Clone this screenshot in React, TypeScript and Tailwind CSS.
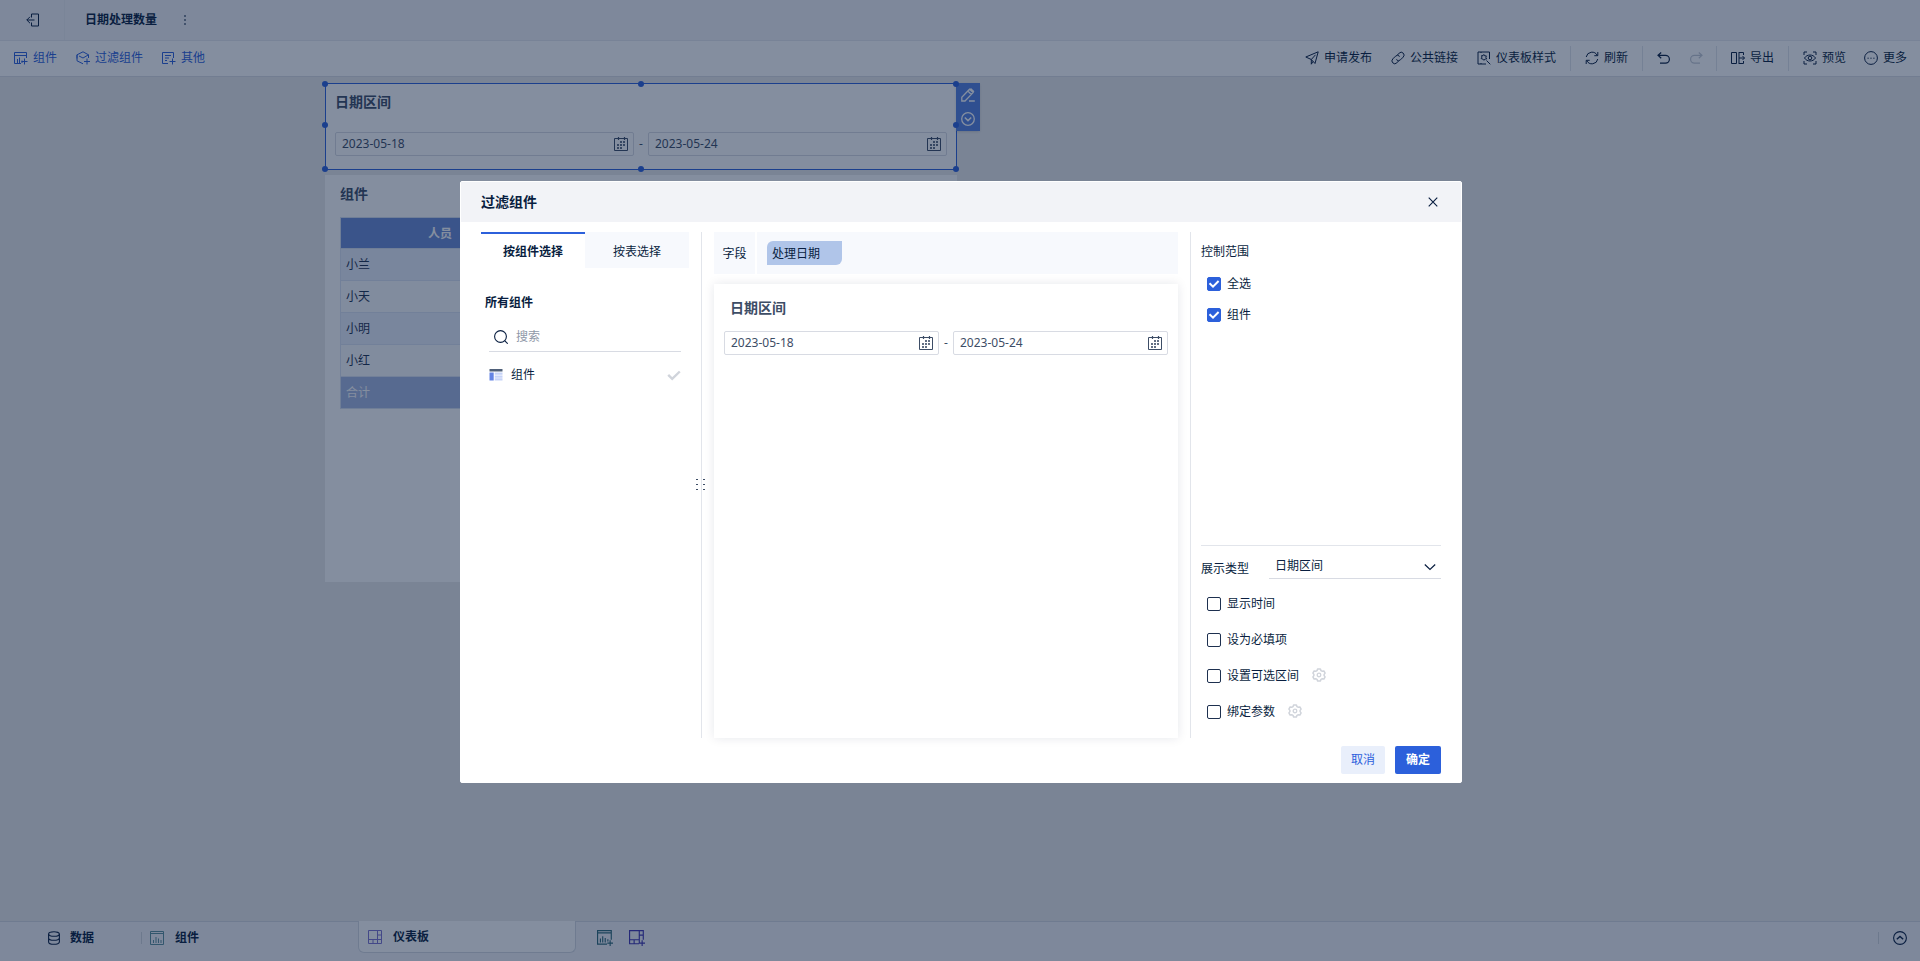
import { useState, type ReactNode } from "react";

type IconProps = { children: ReactNode; className?: string; size?: string; width?: number };

function Icon({ children, className = "", size = "size-[14px]", width = 1 }: IconProps) {
  return (
    <svg
      viewBox="0 0 14 14"
      fill="none"
      stroke="currentColor"
      strokeWidth={width}
      aria-hidden="true"
      className={`shrink-0 ${size} ${className}`}
    >
      {children}
    </svg>
  );
}

const ExitIcon = () => (
  <Icon>
    <path d="M5.500 4.500v-3.500h7v12h-7v-3.500M.8 7h7.700M4 3.800L.8 7 4 10.200" />
  </Icon>
);

const WidgetAddIcon = () => (
  <Icon>
    <path d="M12.500 7V1.500h-12v11H7M.5 4.500h12M3.500 12V8M5.500 12V6.500M8 12V9.500M7.500 10.500h6M10.500 7.500v6" />
  </Icon>
);

const CubeAddIcon = () => (
  <Icon>
    <path d="M7 12.800L1 9.800v-6L7 .8l5.500 3V7M3 5l4 2 5.500-3.200M1 7.500V3.800M8 10.500h6M11 7.500v6" />
  </Icon>
);

const OtherAddIcon = () => (
  <Icon>
    <path d="M11.500 7V1.500H.5v11H6M3 4.500h6M3 7h4M3 9.500h2M7.500 10.500h6M10.500 7.500v6" />
  </Icon>
);

const SendIcon = () => (
  <Icon>
    <path d="M.8 6L13.200.8 10 12.500 6.300 8.500 10.500 3.800M.8 6l5.500 2.500v4.700L8 10.400" />
  </Icon>
);

const LinkIcon = () => (
  <Icon>
    <path d="M6.200 4.300l2-2.200a2.800 2.800 0 014 4L9.500 8.800a2.800 2.800 0 01-4.200-.3" />
    <path d="M7.800 9.700l-2 2.200a2.800 2.800 0 01-4-4L4.500 5.200a2.800 2.800 0 014.200.3" />
  </Icon>
);

const StyleIcon = () => (
  <Icon>
    <path d="M12.500 8V1H1v12h8M9.500 9.500l3.800 3.800M4 1v1M4 12v1" />
    <path d="M6.800 3.500l.9 1.300 1.600.1-.4 1.600.8 1.400-1.600.2-1.300 1.200-1-1.300-1.600-.4.700-1.500-.3-1.500 1.500.1z" />
  </Icon>
);

const RefreshIcon = () => (
  <Icon>
    <path d="M1.200 6A5.900 5.900 0 0112.300 4.500M12.800 8A5.900 5.900 0 011.700 9.500M12.800 1v3.700H9.300M1.200 13V9.300h3.500" />
  </Icon>
);

const UndoIcon = () => (
  <Icon width={1.2}>
    <path d="M4.200 1.500L1 4.300l3.200 2.900M1.200 4.300h7.300a3.900 3.900 0 010 7.800H3" />
  </Icon>
);

const RedoIcon = () => (
  <Icon width={1.2}>
    <path d="M9.800 1.500L13 4.300 9.800 7.200M12.800 4.300H5.500a3.900 3.900 0 000 7.800H11" />
  </Icon>
);

const ExportIcon = () => (
  <Icon>
    <path d="M.5 1.500h5v11h-5zM8 1.500h4.500v2.500M8 12.500h4.500V10M8 1v12M8 7h5.500M11.500 5l2 2-2 2" />
  </Icon>
);

const PreviewIcon = () => (
  <Icon>
    <path d="M1 4V1h3M10 1h3v3M13 10v3h-3M4 13H1v-3" />
    <path d="M1.500 7C4 3 10 3 12.500 7 10 11 4 11 1.500 7z" />
    <circle cx="7" cy="7" r="1.800" />
  </Icon>
);

const MoreIcon = () => (
  <Icon>
    <circle cx="7" cy="7" r="6.400" />
    <path d="M3.500 7.200h1.200M6.400 7.200h1.200M9.300 7.200h1.200" />
  </Icon>
);

const CalendarIcon = () => (
  <Icon>
    <path d="M.5 1.500h13v12H.5z" />
    <path d="M4.500 0v3M10.500 0v3" strokeWidth={1.200} />
    <g fill="currentColor" stroke="none" opacity=".8">
      <rect x="6" y="4" width="2" height="2" />
      <rect x="9" y="4" width="2" height="2" />
      <rect x="3" y="7" width="2" height="2" />
      <rect x="6" y="7" width="2" height="2" />
      <rect x="9" y="7" width="2" height="2" />
      <rect x="3" y="10" width="2" height="2" />
      <rect x="6" y="10" width="2" height="2" />
    </g>
  </Icon>
);

const EditIcon = () => (
  <Icon width={1.3}>
    <path d="M.8 13V9.300L8.500 1.200l3.600 3.400L4 13zM6.800 3l3.600 3.500M9.500.5l3.500 3.300M8 13h5.800" />
  </Icon>
);

const CircleDownIcon = () => (
  <Icon width={1.300}>
    <circle cx="7" cy="7" r="6.300" />
    <path d="M3.800 5.500L7 8.600l3.200-3.100" strokeWidth={1.500} />
  </Icon>
);

const CircleUpIcon = () => (
  <Icon width={1.100}>
    <circle cx="7" cy="7" r="6.400" />
    <path d="M3.800 8.300L7 5.400l3.200 2.900" strokeWidth={1.400} />
  </Icon>
);

const CloseIcon = () => (
  <Icon size="size-[10px]" width={1.600}>
    <path d="M1 1l12 12M13 1L1 13" />
  </Icon>
);

const SearchIcon = () => (
  <Icon width={1.100}>
    <circle cx="6.500" cy="6.500" r="5.900" />
    <path d="M10.700 10.700L13.700 13.700" />
  </Icon>
);

const TableIcon = () => (
  <svg viewBox="0 0 14 14" className="size-[14px] shrink-0" aria-hidden="true">
    <path fill="#4f6079" d="M.5 1h13v2.500H.5z" />
    <path fill="#6484e4" d="M.5 4.500h4.200v8H.5z" />
    <path fill="#c6d3f8" d="M5.700 4.500h7.800v2.300H5.700zM5.700 7.400h7.800v2.300H5.700zM5.700 10.300h7.800v2.200H5.700z" />
  </svg>
);

const TickIcon = () => (
  <Icon width={2.400}>
    <path d="M1.200 6.800l4 4 7.600-7.300" />
  </Icon>
);

const GearIcon = () => (
  <Icon width={1.500}>
    <path
      strokeLinejoin="round"
      d="M5.700.9h2.600l.7 1.700 1 .6 1.900-.3 1.200 2.200-1 1.300v1.200l1 1.300-1.200 2.200-1.900-.3-1 .6-.7 1.700H5.700L5 11.400l-1-.6-1.900.3L.9 8.900l1-1.300V6.400l-1-1.300 1.200-2.200 1.900.3 1-.6z"
    />
    <circle cx="7" cy="7" r="1.800" strokeWidth={1.300} />
  </Icon>
);

const DatabaseIcon = () => (
  <Icon width={1.100}>
    <ellipse cx="7" cy="3" rx="5.400" ry="2.300" />
    <path d="M1.600 3v8c0 1.300 2.400 2.300 5.400 2.300s5.400-1 5.400-2.300V3M1.600 7c0 1.300 2.400 2.300 5.400 2.300s5.400-1 5.400-2.300" />
  </Icon>
);

const ChartIcon = () => (
  <Icon>
    <path d="M.5.500h13v13H.5zM.5 2.500h13M3.500 12V9M6 12V6M8.500 12V7.500M11 12V9" />
  </Icon>
);

const ChartAddIcon = () => (
  <Icon size="size-4">
    <path d="M12.500 8.500V.5H.5v11.800h8.300M.5 2.500h12M3 11V7.500M5 11V5.500M7.200 11V7M9.500 10V8M9 11.500h5M11.500 9v5" />
  </Icon>
);

const BoardIcon = () => (
  <Icon>
    <path d="M.5.5h13v13H.5zM.5 9.500h13M9.500.5v13M9.500 5h4M5 9.500v4" />
  </Icon>
);

const BoardAddIcon = () => (
  <Icon size="size-4">
    <path d="M12.500 8.500V.5H.5v11.500h8.300M.5 8.500h9M9 .5V12M9 4.500h3.500M4.500 8.500V12M9 11.500h5M11.500 9v5" />
  </Icon>
);

function ToolButton({ icon, label, className = "" }: { icon: ReactNode; label: string; className?: string }) {
  return (
    <button type="button" className={`flex items-center gap-[5px] ${className}`}>
      {icon}
      {label}
    </button>
  );
}

const Separator = () => <span className="h-[25px] w-px bg-[#e1e4ea]" />;

function DateField({ label, value }: { label: string; value: string }) {
  const [date, setDate] = useState(value);
  return (
    <div className="flex h-6 min-w-0 flex-1 items-center rounded-[2px] border border-[#d8dbe3] pr-[5px] pl-1.5">
      <input
        type="text"
        aria-label={label}
        value={date}
        onChange={(e) => setDate(e.target.value)}
        className="min-w-0 flex-1 bg-transparent outline-none"
      />
      <button type="button" aria-label={`${label} 日历`}>
        <CalendarIcon />
      </button>
    </div>
  );
}

function DateRange() {
  return (
    <div className="flex items-center text-[#3d4d66]">
      <DateField label="开始日期" value="2023-05-18" />
      <span className="w-[14px] text-center">-</span>
      <DateField label="结束日期" value="2023-05-24" />
    </div>
  );
}

function CheckRow({ label, checked = false, children }: { label: string; checked?: boolean; children?: ReactNode }) {
  const [on, setOn] = useState(checked);
  return (
    <div className="flex items-center gap-[13px]">
      <label className="flex items-center gap-1.5">
        <span className="grid size-[14px]">
          <input
            type="checkbox"
            checked={on}
            onChange={(e) => setOn(e.target.checked)}
            className="peer col-start-1 row-start-1 size-[14px] appearance-none rounded-[2px] border border-[#1d304f] bg-white checked:border-[#2c60db] checked:bg-[#2c60db]"
          />
          <svg
            viewBox="0 0 14 14"
            fill="none"
            stroke="white"
            strokeWidth="2"
            aria-hidden="true"
            className="pointer-events-none invisible col-start-1 row-start-1 size-[14px] peer-checked:visible"
          >
            <path d="M2.500 6.300l3.500 3.400 5.600-5.700" />
          </svg>
        </span>
        {label}
      </label>
      {children}
    </div>
  );
}

const HANDLES = [
  "-left-1 -top-[3px]",
  "left-1/2 -translate-x-1/2 -top-[3px]",
  "-right-[3px] -top-[3px]",
  "-left-1 top-[38px]",
  "-right-[3px] top-[38px]",
  "-left-1 -bottom-[3px]",
  "left-1/2 -translate-x-1/2 -bottom-[3px]",
  "-right-[3px] -bottom-[3px]",
];

const ROWS = ["小兰", "小天", "小明", "小红"];

function Dashboard() {
  return (
    <main className="flex-1 bg-[#ebebeb] pt-[6px] pl-[325px]">
      <section className="relative h-[87px] w-[632px] border border-[#2c60db] bg-white px-[9px] pt-2 text-[#3d4d66]">
        <h2 className="text-sm leading-5 font-bold">日期区间</h2>
        <div className="mt-5">
          <DateRange />
        </div>
        <div className="absolute -top-px left-full flex h-12 w-6 flex-col items-center justify-around bg-[#5580e0] text-white shadow">
          <button type="button" aria-label="编辑">
            <EditIcon />
          </button>
          <button type="button" aria-label="展开">
            <CircleDownIcon />
          </button>
        </div>
        {HANDLES.map((place) => (
          <span key={place} className={`absolute size-1.5 rounded-full bg-[#2c60db] ${place}`} />
        ))}
      </section>

      <section className="mt-[5px] h-[407px] w-[632px] bg-white px-[15px] pt-[9px]">
        <h2 className="text-sm leading-5 font-bold text-[#3d4d66]">组件</h2>
        <table className="mt-[13px] w-[200px] table-fixed border-collapse text-[#1d304f]">
          <thead>
            <tr className="h-[31px] border border-[#d5deef] bg-[#6a8ad4] text-white">
              <th className="pt-0.5 font-bold">人员</th>
            </tr>
          </thead>
          <tbody>
            {ROWS.map((name) => (
              <tr key={name} className="h-8 border border-[#dbe3f3] odd:bg-[#e9eefa] even:bg-[#f9fafc]">
                <td className="px-[5px]">{name}</td>
              </tr>
            ))}
          </tbody>
          <tfoot>
            <tr className="h-8 border border-[#d5deef] bg-[#a5b6e0] text-white">
              <td className="px-[5px]">合计</td>
            </tr>
          </tfoot>
        </table>
      </section>
    </main>
  );
}

function ComponentPicker() {
  return (
    <div className="w-[221px] border-r border-[#e2e5eb] pr-3">
      <div role="tablist" className="flex h-9">
        <button type="button" role="tab" aria-selected="true" className="flex-1 border-t-2 border-[#2c60db] pt-0.5 font-bold">
          按组件选择
        </button>
        <button type="button" role="tab" aria-selected="false" className="flex-1 border-t-2 border-[#f7f9fd] bg-[#f7f9fd] pt-0.5">
          按表选择
        </button>
      </div>
      <h3 className="mt-[25px] pl-1 leading-5 font-bold">所有组件</h3>
      <div className="mx-2 mt-[10px] flex h-[29px] items-center gap-2 border-b border-[#d8dbe3] pl-[5px]">
        <SearchIcon />
        <input
          type="text"
          aria-label="搜索"
          placeholder="搜索"
          className="w-full min-w-0 bg-transparent outline-none placeholder:text-[#9098a8]"
        />
      </div>
      <button type="button" className="mt-[11px] flex h-6 w-full items-center gap-2 px-2">
        <TableIcon />
        <span className="flex-1 text-left">组件</span>
        <span className="text-[#d0d4db]">
          <TickIcon />
        </span>
      </button>
    </div>
  );
}

function DragHandle() {
  return (
    <div className="absolute top-1/2 left-[215px] -mt-[6px] grid grid-cols-2 gap-x-[5px] gap-y-[4px]">
      {[0, 1, 2, 3, 4, 5].map((dot) => (
        <span key={dot} className="h-px w-[2px] bg-[#3d4d66]" />
      ))}
    </div>
  );
}

function FilterDialog() {
  return (
    <div className="fixed inset-0 flex items-center justify-center bg-[#091e40]/50 pt-[3px] pl-[2px]">
      <div
        role="dialog"
        aria-modal="true"
        aria-labelledby="dialog-title"
        className="flex h-[602px] w-[1002px] flex-col rounded-[2px] border border-white bg-white"
      >
        <header className="flex h-10 items-center justify-between bg-[#f2f3f7] pr-[23px] pl-5">
          <h2 id="dialog-title" className="text-sm font-bold">
            过滤组件
          </h2>
          <button type="button" aria-label="关闭">
            <CloseIcon />
          </button>
        </header>

        <div className="relative mx-5 mt-[10px] flex min-h-0 flex-1">
          <ComponentPicker />
          <DragHandle />

          <div className="flex min-w-0 flex-1 flex-col px-3">
            <div className="flex h-[42px] gap-[2px]">
              <div className="flex w-[41px] items-center justify-center bg-[#f7f9fd] pt-0.5">字段</div>
              <div className="flex flex-1 items-center bg-[#f7f9fd] px-[10px]">
                <span className="h-6 w-[75px] rounded-tl-md rounded-br-md bg-[#b0c5e9] pt-px pl-[5px] leading-6">处理日期</span>
              </div>
            </div>
            <div className="mt-[10px] flex-1 bg-white px-[10px] pt-[14px] shadow-[0_0_10px_rgba(9,30,64,0.1)]">
              <h3 className="pl-1.5 text-sm leading-5 font-bold text-[#3d4d66]">日期区间</h3>
              <div className="mt-[13px]">
                <DateRange />
              </div>
            </div>
          </div>

          <div className="flex w-[251px] flex-col border-l border-[#e2e5eb] pl-[10px]">
            <h3 className="mt-[10px] leading-5">控制范围</h3>
            <div className="mt-[13px] flex flex-col gap-[13px] pl-1.5 leading-[18px]">
              <CheckRow label="全选" checked />
              <CheckRow label="组件" checked />
            </div>

            <div className="mt-auto border-t border-[#e2e5eb] pb-[17px]">
              <div className="mt-[6px] flex items-center gap-5">
                <label htmlFor="display-type" className="pt-[7px]">
                  展示类型
                </label>
                <div className="grid flex-1 items-center border-b border-[#d8dbe3]">
                  <select
                    id="display-type"
                    className="col-start-1 row-start-1 h-[26px] appearance-none bg-transparent px-1.5 pt-px outline-none"
                  >
                    <option>日期区间</option>
                  </select>
                  <svg
                    viewBox="0 0 12 12"
                    fill="none"
                    stroke="currentColor"
                    strokeWidth="1.200"
                    aria-hidden="true"
                    className="pointer-events-none col-start-1 row-start-1 mt-1 mr-[5px] size-3 justify-self-end"
                  >
                    <path d="M.8 3.500L6 8.500l5.200-5" />
                  </svg>
                </div>
              </div>
              <div className="mt-4 flex flex-col gap-[18px] pl-1.5 leading-[18px]">
                <CheckRow label="显示时间" />
                <CheckRow label="设为必填项" />
                <CheckRow label="设置可选区间">
                  <button type="button" aria-label="设置可选区间" className="pb-0.5 text-[#d0d4db]">
                    <GearIcon />
                  </button>
                </CheckRow>
                <CheckRow label="绑定参数">
                  <button type="button" aria-label="设置绑定参数" className="pb-0.5 text-[#d0d4db]">
                    <GearIcon />
                  </button>
                </CheckRow>
              </div>
            </div>
          </div>
        </div>

        <footer className="flex justify-end gap-[10px] px-5 pt-2 pb-2">
          <button type="button" className="h-7 w-11 rounded-[2px] bg-[#e9effb] text-[#2c60db]">
            取消
          </button>
          <button type="button" className="h-7 w-[46px] rounded-[2px] bg-[#2c60db] font-bold text-white">
            确定
          </button>
        </footer>
      </div>
    </div>
  );
}

export default function App() {
  return (
    <div className="flex min-h-screen flex-col bg-white font-['Noto_Sans','Noto_Sans_CJK_SC',sans-serif] text-xs text-[#091e40]">
      <header className="flex h-[41px] items-center border-b border-[#e6e8ee] bg-[#f2f3f7]">
        <button type="button" aria-label="退出" className="flex h-full w-[65px] items-center border-r border-[#eaecf1] pl-[26px]">
          <ExitIcon />
        </button>
        <h1 className="pl-5 font-bold">日期处理数量</h1>
        <button type="button" aria-label="更多操作" className="ml-[27px] flex flex-col gap-[2px]">
          <span className="size-[2px] bg-[#7a8699]" />
          <span className="size-[2px] bg-[#7a8699]" />
          <span className="size-[2px] bg-[#7a8699]" />
        </button>
      </header>

      <nav className="flex h-9 items-center justify-between border-b border-[#dadde3] bg-white pr-[13px] pb-px pl-[14px]">
        <div className="flex gap-[19px] text-[#2c60db]">
          <ToolButton icon={<WidgetAddIcon />} label="组件" />
          <ToolButton icon={<CubeAddIcon />} label="过滤组件" />
          <ToolButton icon={<OtherAddIcon />} label="其他" />
        </div>
        <div className="flex items-center">
          <ToolButton icon={<SendIcon />} label="申请发布" />
          <ToolButton icon={<LinkIcon />} label="公共链接" className="ml-[19px]" />
          <ToolButton icon={<StyleIcon />} label="仪表板样式" className="mr-[14px] ml-[19px]" />
          <Separator />
          <ToolButton icon={<RefreshIcon />} label="刷新" className="mx-[14px]" />
          <Separator />
          <button type="button" aria-label="撤销" className="ml-[14px]">
            <UndoIcon />
          </button>
          <button type="button" aria-label="重做" disabled className="mr-[13px] ml-[18px] text-[#c3c9d3]">
            <RedoIcon />
          </button>
          <Separator />
          <ToolButton icon={<ExportIcon />} label="导出" className="mr-[14px] ml-[14px]" />
          <Separator />
          <ToolButton icon={<PreviewIcon />} label="预览" className="ml-[14px]" />
          <ToolButton icon={<MoreIcon />} label="更多" className="ml-[18px]" />
        </div>
      </nav>

      <Dashboard />

      <footer className="flex h-10 border-t border-[#d5d9e1] bg-[#f2f3f7] font-bold">
        <button type="button" className="flex h-[31px] w-[141px] items-center gap-[9px] pl-[47px]">
          <DatabaseIcon />
          数据
        </button>
        <button type="button" className="flex h-[31px] w-[217px] items-center">
          <span className="mr-2 h-3 w-px bg-[#d0d4db]" />
          <span className="mr-[11px] text-[#5b8f9a]">
            <ChartIcon />
          </span>
          组件
        </button>
        <button
          type="button"
          className="-mt-px flex h-8 w-[218px] items-center gap-[11px] rounded-b-md border border-t-0 border-[#d5d9e1] bg-white pl-[9px]"
        >
          <span className="text-[#7d72d0]">
            <BoardIcon />
          </span>
          仪表板
        </button>
        <div className="ml-[21px] flex h-[31px] items-center gap-4">
          <button type="button" aria-label="新建组件" className="text-[#2f6a78]">
            <ChartAddIcon />
          </button>
          <button type="button" aria-label="新建仪表板" className="text-[#4035b0]">
            <BoardAddIcon />
          </button>
        </div>
        <div className="mr-[13px] ml-auto flex h-[31px] items-center gap-[14px]">
          <span className="h-3 w-px bg-[#d0d4db]" />
          <button type="button" aria-label="收起">
            <CircleUpIcon />
          </button>
        </div>
      </footer>

      <FilterDialog />
    </div>
  );
}
